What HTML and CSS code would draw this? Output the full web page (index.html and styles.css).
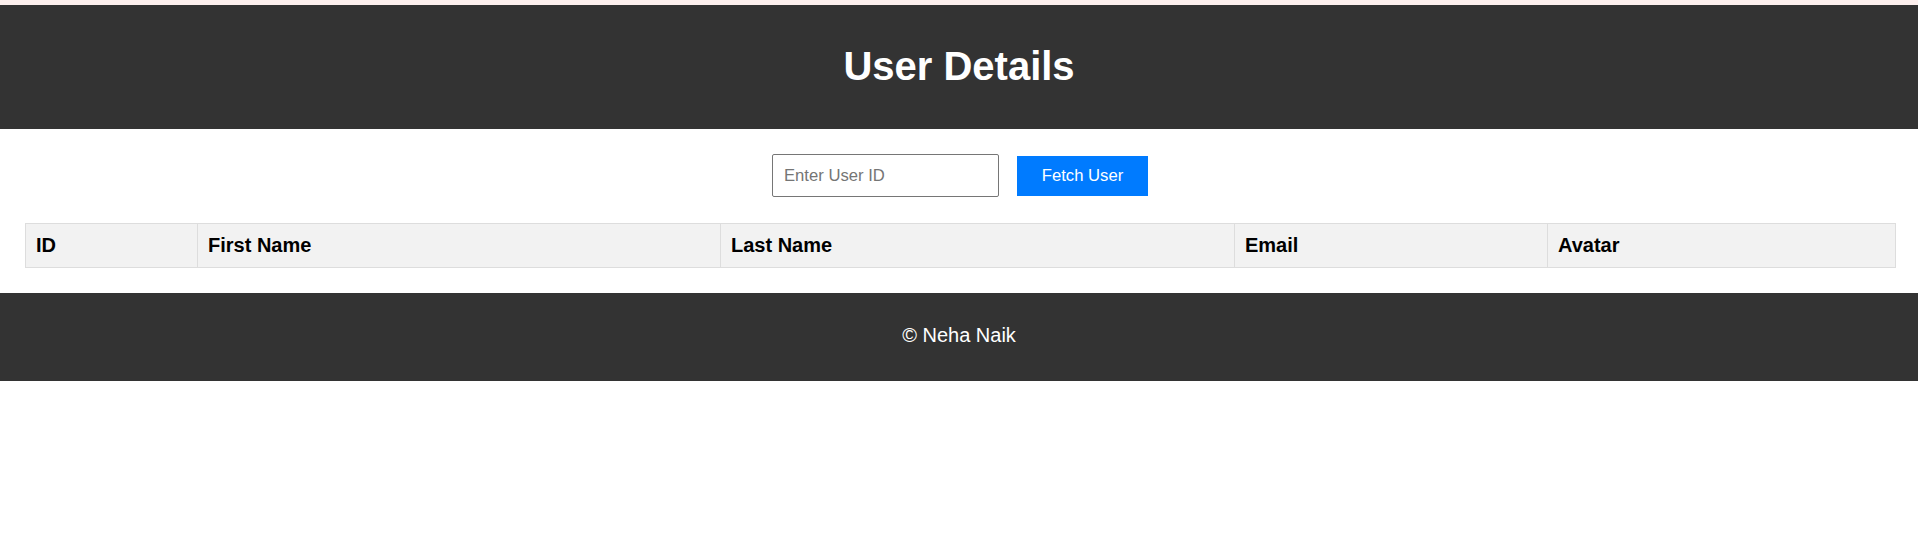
FILE: index.html
```html
<!DOCTYPE html>
<html lang="en">
<head>
<meta charset="utf-8">
<title>User Details</title>
<link rel="stylesheet" href="styles.css">
</head>
<body>
<header class="site-header">
  <h1 class="title">User Details</h1>
</header>
<main class="content">
  <div class="controls">
    <input class="user-input" type="text" placeholder="Enter User ID">
    <button class="fetch-btn" type="button">Fetch User</button>
  </div>
  <table class="users">
    <colgroup>
      <col class="c-id">
      <col class="c-first">
      <col class="c-last">
      <col class="c-email">
      <col class="c-avatar">
    </colgroup>
    <thead>
      <tr>
        <th>ID</th>
        <th>First Name</th>
        <th>Last Name</th>
        <th>Email</th>
        <th>Avatar</th>
      </tr>
    </thead>
    <tbody></tbody>
  </table>
</main>
<footer class="site-footer">
  <p class="copy">© Neha Naik</p>
</footer>
</body>
</html>
```

FILE: styles.css
```css
html {
  background: #ffffff;
}
body {
  margin: 0;
  border-top: 5px solid #fdf0ee;
  font-family: "Liberation Sans", Arial, sans-serif;
  background: #ffffff;
}
.site-header {
  background: #333333;
  color: #ffffff;
  height: 124px;
  display: flex;
  align-items: center;
  justify-content: center;
}
.title {
  margin: 0;
  font-size: 40px;
  font-weight: bold;
  line-height: 46px;
  position: relative;
  top: -1px;
}
.content {
  padding: 25px;
}
.controls {
  display: flex;
  justify-content: center;
  align-items: center;
  gap: 18px;
  margin-bottom: 26px;
  padding-left: 2px;
}
.user-input {
  box-sizing: border-box;
  width: 227px;
  height: 43px;
  padding: 0 11px;
  border: 1px solid #767676;
  border-radius: 2px;
  font-family: "Liberation Sans", Arial, sans-serif;
  font-size: 16.67px;
  color: #000;
}
.user-input::placeholder {
  color: #757575;
}
.fetch-btn {
  box-sizing: border-box;
  width: 131px;
  height: 40px;
  border: none;
  border-radius: 0;
  background: #007bff;
  color: #ffffff;
  font-family: "Liberation Sans", Arial, sans-serif;
  font-size: 16.67px;
  padding: 0;
}
.users {
  width: 1870px;
  border-collapse: collapse;
  table-layout: fixed;
}
.c-id { width: 172px; }
.c-first { width: 523px; }
.c-last { width: 514px; }
.c-email { width: 313px; }
.c-avatar { width: 348px; }
.users th {
  background: #f2f2f2;
  border: 1px solid #dddddd;
  padding: 10px;
  text-align: left;
  font-size: 20px;
  font-weight: bold;
  line-height: 23px;
  color: #000000;
}
.site-footer {
  background: #333333;
  color: #ffffff;
  height: 88px;
  display: flex;
  align-items: center;
  justify-content: center;
}
.copy {
  margin: 0;
  font-size: 20px;
  line-height: 23px;
  position: relative;
  top: -2px;
}
```
